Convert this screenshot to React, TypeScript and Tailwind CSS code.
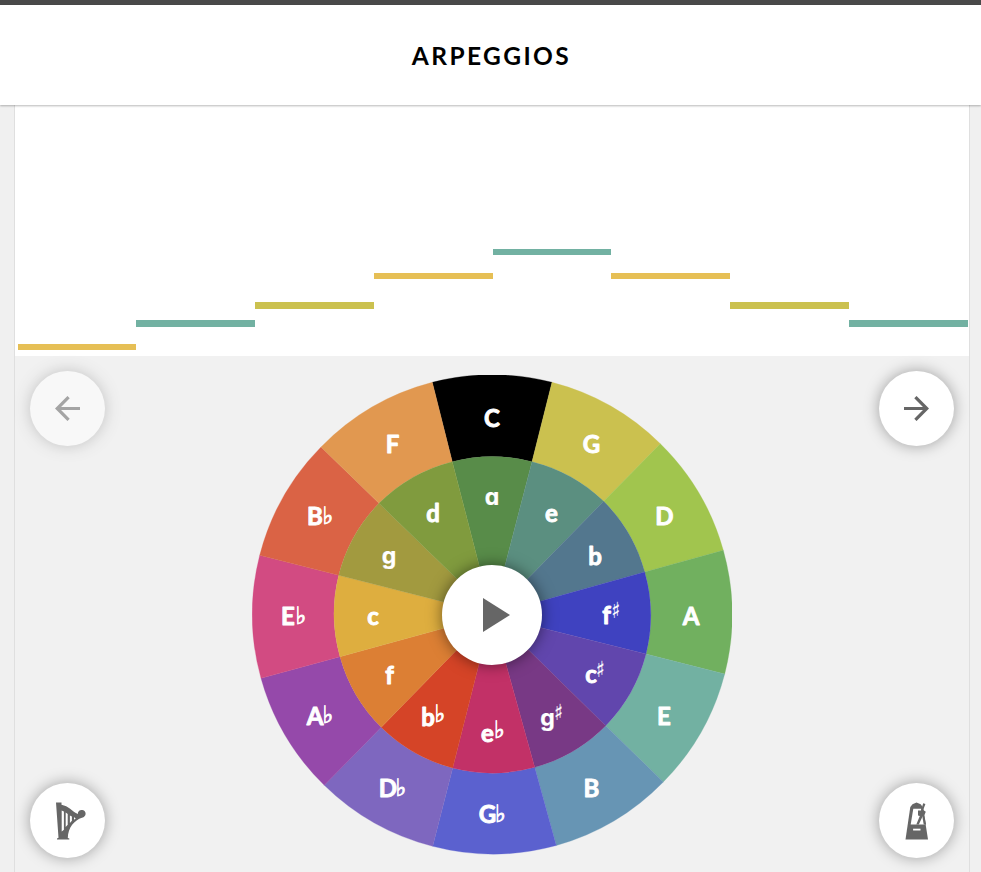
const C = { x: 492, y: 615 };
const toPath = (i: number) => {
  const n = (i + 1) % 12;
  return [
    `M${inner[i]} L${outer[i]} A240 239.6 0 0 1 ${outer[n]} L${inner[n]} A158.5 158.5 0 0 0 ${inner[i]} Z`,
    `M${C.x} ${C.y} L${hub[i]} L${inner[i]} A158.5 158.5 0 0 1 ${inner[n]} L${hub[n]} Z`,
  ];
};

// Spoke end points, clockwise from the left edge of the C segment.
const outer = ["432.3 382.3", "552 382.3", "660.3 443.7", "723.3 550.3", "724.7 674", "663.3 782", "556.3 845.5", "432.7 846.3", "324.3 785.3", "261 678.3", "259.7 555.3", "321 447"];
const inner = ["452.3 461.7", "532 461.7", "603.7 501.3", "644.7 572", "646 654", "605.7 725.7", "534.7 767.3", "452.7 768", "381.3 727.3", "340 656.7", "338.7 575.3", "379 503.3"];
const hub = ["479.3 566", "505 565.5", "528.3 578.3", "541 601", "541 627.7", "529.3 650.7", "506 664", "479 664", "455.7 651", "443.7 628.3", "443.7 602", "456 578"];

type Key = { n: string; a?: string; x: number; y: number; c: string };
const majors: Key[] = [
  { n: "C", x: 492, y: 426.5, c: "#000000" },
  { n: "G", x: 591.5, y: 452.5, c: "#cbc14f" },
  { n: "D", x: 664.5, y: 525, c: "#a1c54e" },
  { n: "A", x: 691, y: 625, c: "#71b05f" },
  { n: "E", x: 664, y: 724.5, c: "#72b1a2" },
  { n: "B", x: 591.5, y: 797, c: "#6795b4" },
  { n: "G", a: "♭", x: 492.5, y: 823, c: "#5b61cf" },
  { n: "D", a: "♭", x: 393, y: 797, c: "#7e67bf" },
  { n: "A", a: "♭", x: 320, y: 724.5, c: "#9549aa" },
  { n: "E", a: "♭", x: 293, y: 625, c: "#d24b82" },
  { n: "B", a: "♭", x: 320, y: 525, c: "#da6345" },
  { n: "F", x: 392.5, y: 452.5, c: "#e19850" },
];
const minors: Key[] = [
  { n: "a", x: 492, y: 505, c: "#588c49" },
  { n: "e", x: 551.5, y: 521.5, c: "#5b8f80" },
  { n: "b", x: 595, y: 564.5, c: "#53778e" },
  { n: "f", a: "♯", x: 611, y: 624, c: "#3f42c0" },
  { n: "c", a: "♯", x: 595.5, y: 683, c: "#6146ad" },
  { n: "g", a: "♯", x: 552, y: 725.5, c: "#783985" },
  { n: "e", a: "♭", x: 492, y: 742, c: "#c23167" },
  { n: "b", a: "♭", x: 432.5, y: 726, c: "#d54427" },
  { n: "f", x: 389.5, y: 683.5, c: "#dc7f34" },
  { n: "c", x: 373, y: 624.5, c: "#deae3f" },
  { n: "g", x: 389, y: 563.5, c: "#a29a3f" },
  { n: "d", x: 433, y: 521.5, c: "#809b3e" },
];

function Label({ k, minor }: { k: Key; minor?: boolean }) {
  const single = k.n === "a" || k.n === "g";
  const left = k.a ? k.x - (minor ? 4.5 : 5) : k.x;
  // "a" and "g" use the single-storey forms.
  const face = single
    ? "text-[23px] font-bold [font-family:Inter,sans-serif] [font-feature-settings:'cv11']"
    : "text-[24px] font-bold [font-family:Lato,sans-serif]";
  return (
    <g fill="white" stroke="white" strokeLinejoin="round">
      <text x={left} y={k.y} textAnchor="middle" strokeWidth={single ? 0.2 : 0.9} className={face}>{k.n}</text>
      {k.a === "♭" && (
        <text transform={`translate(${k.x + (minor ? 2 : 2.5)} ${k.y - (minor ? 4 : 1.5)}) scale(.95 1)`} className="text-[24px] [font-family:'DejaVu_Sans',sans-serif]" strokeWidth=".8">♭</text>
      )}
      {k.a === "♯" && (
        <text transform={`translate(${k.x + (k.n === "g" ? 2.2 : 0.5)} ${k.y - 6}) scale(.8 1)`} className="text-[22px] [font-family:'DejaVu_Sans',sans-serif]" strokeWidth=".2">♯</text>
      )}
    </g>
  );
}

function Wheel() {
  return (
    <svg viewBox="252 375 480 480" className="h-[480px] w-[480px]" role="img" aria-label="Circle of fifths">
      {majors.map((k, i) => <path key={i} d={toPath(i)[0]} fill={k.c} stroke={k.c} strokeWidth=".3" />)}
      {minors.map((k, i) => <path key={i} d={toPath(i)[1]} fill={k.c} stroke={k.c} strokeWidth=".3" />)}
      {majors.map((k, i) => <Label key={i} k={k} />)}
      {minors.map((k, i) => <Label key={i} k={k} minor />)}
    </svg>
  );
}

const round = "flex size-[75px] items-center justify-center rounded-full bg-white shadow-[0_0_15px_rgba(0,0,0,0.35)]";

function Arrow({ flip }: { flip?: boolean }) {
  return (
    <svg viewBox="0 0 25 25" className={flip ? "size-[25px] -scale-x-100" : "size-[25px]"} fill="none" stroke="#666" strokeWidth="3.2">
      <path d="M0 12.5H23M11.4 1.1L22.8 12.5L11.4 23.9" />
    </svg>
  );
}

function Harp() {
  return (
    <svg viewBox="51.5 800.5 32 40" className="h-10 w-8 overflow-visible" fill="#666">
      <path fillRule="evenodd" d="M55.5 802H61V804.3C68 805.5 71.5 811 77.5 813.5C77 810.8 79.5 809.3 82 809.5C86.5 810.5 86 816.5 81.5 817.2C74 819.5 67.5 827 67.3 837.5L68.8 838V839H56.5V838L58 837.3ZM61.2 810V831L63.4 829.3V811ZM65.2 812V826.5L67.2 824.2V813.5ZM69.4 815V822.4L71.4 820.2V816ZM73.5 816.8V819.2L75.3 817.7Z" />
    </svg>
  );
}

function Metronome() {
  return (
    <svg viewBox="903.5 800.5 26 40" className="h-10 w-[26px]" fill="#666">
      <path d="M909.8 806.5L912 803.8L916 802L920.2 803.8L922.5 807L927.5 839H905Z" />
      <path d="M912.8 808.2H922.2L924.3 824H910.2Z" fill="white" />
      <path d="M922.3 807L925.6 824H923.2L920.5 808Z" />
      <path d="M922.7 802.8L924.9 803.6L922.7 809.5L925.3 811.2L924 814.2L922.3 815.5L918.3 824H915.8L919.3 815.5L917.5 815V810L920.5 810Z" />
      <path d="M912.6 828.2H920V830H912.6Z" fill="white" />
    </svg>
  );
}

const notes = [
  { c: "bg-[#e6bf55]", t: "mt-[238px] h-[6px]" },
  { c: "bg-[#72b1a2]", t: "mt-[214px] h-[7px]" },
  { c: "bg-[#cbc14f]", t: "mt-[196px] h-[7px]" },
  { c: "bg-[#e6bf55]", t: "mt-[167px] h-[6px]" },
  { c: "bg-[#72b1a2]", t: "mt-[143px] h-[6px]" },
  { c: "bg-[#e6bf55]", t: "mt-[167px] h-[6px]" },
  { c: "bg-[#cbc14f]", t: "mt-[196px] h-[7px]" },
  { c: "bg-[#72b1a2]", t: "mt-[214px] h-[7px]" },
];

export default function App() {
  return (
    <div className="flex h-[872px] w-[981px] flex-col overflow-hidden bg-[#f0f0f0]">
      <div className="h-[5px] shrink-0 bg-[#494949]" />
      <header className="relative z-10 flex h-[100px] shrink-0 items-center justify-center bg-white shadow-[0_1px_2px_rgba(0,0,0,0.28)]">
        <h1 className="pt-[3px] pl-[2px] text-[24.5px] font-bold tracking-[2.4px] text-black [font-family:Lato,sans-serif]">ARPEGGIOS</h1>
      </header>
      <main className="mx-[14px] flex w-[956px] grow flex-col border-x border-[#dfdfdf] bg-[#f1f1f1]">
        <section className="flex h-[251px] shrink-0 items-start bg-white pt-[1px] pr-[1.3px] pl-[2.7px]">
          {notes.map((n, i) => <div key={i} className={`flex-1 ${n.c} ${n.t}`} />)}
        </section>
        <section className="flex grow justify-between px-[15px]">
          <div className="flex flex-col justify-between pt-[15px] pb-[14px]">
            <button aria-label="Previous" className={`${round} opacity-55`}><Arrow flip /></button>
            <button aria-label="Instrument" className={round}><Harp /></button>
          </div>
          <div className="grid place-items-center pt-[2px]">
            <div className="col-start-1 row-start-1"><Wheel /></div>
            <button aria-label="Play" className="z-10 col-start-1 row-start-1 flex size-[100px] items-center justify-center rounded-full bg-white shadow-[0_0_15px_rgba(0,0,0,0.5)]">
              <svg viewBox="0 0 27 34" className="ml-[9px] h-[34px] w-[27px]" fill="#666"><path d="M0 0L27 17L0 34Z" /></svg>
            </button>
          </div>
          <div className="flex flex-col justify-between pt-[15px] pb-[14px]">
            <button aria-label="Next" className={round}><Arrow /></button>
            <button aria-label="Metronome" className={round}><Metronome /></button>
          </div>
        </section>
      </main>
    </div>
  );
}
